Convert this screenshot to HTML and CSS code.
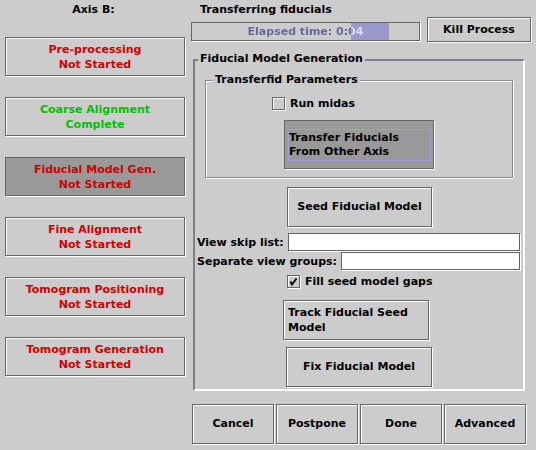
FILE: index.html
```html
<!DOCTYPE html>
<html>
<head>
<meta charset="utf-8">
<link rel="stylesheet" href="styles.css">
</head>
<body>
<div class="app">
  <div class="left">
    <div class="axis">Axis B:</div>
    <div class="btn stage red"><span>Pre-processing</span><span>Not Started</span></div>
    <div class="btn stage green"><span>Coarse Alignment</span><span>Complete</span></div>
    <div class="btn on stage red"><span>Fiducial Model Gen.</span><span>Not Started</span></div>
    <div class="btn stage red"><span>Fine Alignment</span><span>Not Started</span></div>
    <div class="btn stage red"><span>Tomogram Positioning</span><span>Not Started</span></div>
    <div class="btn stage red"><span>Tomogram Generation</span><span>Not Started</span></div>
  </div>
  <div class="right">
    <div class="top">
      <div class="status">
        <div class="title">Transferring fiducials</div>
        <div class="progress">
          <div class="ptext">Elapsed time: 0:04</div>
        </div>
      </div>
      <div class="btn kill">Kill Process</div>
    </div>
    <fieldset class="outer">
      <legend>Fiducial Model Generation</legend>
      <fieldset class="inner">
        <legend>Transferfid Parameters</legend>
        <label class="check midas"><span class="box"></span><span>Run midas</span></label>
        <div class="btn on transfer"><span class="focus">Transfer Fiducials<br>From Other Axis</span></div>
      </fieldset>
      <div class="btn seed">Seed Fiducial Model</div>
      <div class="row first"><span class="lbl">View skip list:</span><span class="field"></span></div>
      <div class="row"><span class="lbl">Separate view groups:</span><span class="field"></span></div>
      <label class="check fillseed"><span class="box"><svg width="13" height="13" viewBox="0 0 13 13"><path d="M3.5 6.5 L5 9.5 L9.5 3.5" fill="none" stroke="#000" stroke-width="1.8"/></svg></span><span>Fill seed model gaps</span></label>
      <div class="btn track">Track Fiducial Seed<br>Model</div>
      <div class="btn fix">Fix Fiducial Model</div>
    </fieldset>
    <div class="actions">
      <div class="btn act">Cancel</div>
      <div class="btn act">Postpone</div>
      <div class="btn act">Done</div>
      <div class="btn act">Advanced</div>
    </div>
  </div>
</div>
</body>
</html>
```
FILE: styles.css
```css
* { box-sizing: border-box; }
html, body { margin: 0; padding: 0; }
body {
  width: 536px;
  height: 450px;
  overflow: hidden;
  background: #cccccc;
  color: #000;
  font-family: "DejaVu Sans", sans-serif;
  font-weight: bold;
  font-size: 11px;
  line-height: 15px;
}
.app { display: flex; }

.btn {
  border: 1px solid #666666;
  background: #cccccc;
  box-shadow: inset 1px 1px #ffffff, 1px 1px #ffffff;
}
.btn.on {
  background: #999999;
  box-shadow: 1px 1px #ffffff;
}

.left { width: 191px; flex: none; }
.axis {
  width: 187px;
  height: 37px;
  padding-top: 2px;
  text-align: center;
}
.stage {
  margin-left: 5px;
  margin-bottom: 21px;
  width: 180px;
  height: 39px;
  display: flex;
  flex-direction: column;
  align-items: center;
  justify-content: center;
}
.red { color: #cc0000; }
.green { color: #00c000; }

.right { width: 345px; flex: none; }
.top { display: flex; align-items: flex-start; }
.status { width: 229px; padding-top: 2px; }
.title { padding-left: 9px; }
.progress {
  margin-top: 5px;
  height: 19px;
  border: 1px solid #666666;
  box-shadow: 1px 1px #ffffff;
  background: linear-gradient(to right, #cccccc 159px, #9999cc 159px, #9999cc 197px, #cccccc 197px);
}
.ptext {
  width: 227px;
  line-height: 17px;
  text-align: center;
  color: transparent;
  background: linear-gradient(to right, #666699 159px, #ddddff 159px, #ddddff 197px, #666699 197px);
  -webkit-background-clip: text;
  background-clip: text;
}
.kill {
  margin-left: 7px;
  margin-top: 17px;
  width: 104px;
  height: 25px;
  line-height: 23px;
  text-align: center;
}

fieldset { margin: 0; min-width: 0; }
legend {
  line-height: 15px;
  padding: 0 2px 2px;
  background: #cccccc;
}
.outer {
  margin: 9px 0 0 2px;
  width: 332px;
  padding: 0 0 2px 0;
  border: 2px solid;
  border-color: #7f7f8c #ffffff #ffffff #7f7f8c;
}
.outer > legend { margin-left: 3px; }
.inner {
  margin: 4px 10px 0;
  padding: 0 0 8px 0;
  border: 1px solid #8a8a96;
  box-shadow: inset 1px 1px #ffffff, 1px 1px #ffffff;
}
.inner > legend { margin-left: 7px; }

.check { display: flex; align-items: center; }
.box {
  width: 13px;
  height: 13px;
  border: 1px solid #666666;
  box-shadow: inset 1px 1px #ffffff, 1px 1px #ffffff;
  margin-right: 5px;
  position: relative;
}
.box svg { position: absolute; left: -1px; top: -1px; }
.midas { margin: 7px 0 0 66px; }
.transfer {
  margin: 9px 0 0 78px;
  width: 150px;
  height: 49px;
  padding-left: 3px;
  display: flex;
  align-items: center;
}
.focus {
  display: block;
  width: 143px;
  height: 32px;
  border: 1px solid #a0a0d8;
  padding-top: 1px;
  line-height: 14px;
}
.seed {
  margin: 9px 0 0 92px;
  width: 145px;
  height: 40px;
  line-height: 38px;
  text-align: center;
}
.row {
  display: flex;
  height: 19px;
  line-height: 19px;
  padding-left: 2px;
  margin-right: 3px;
}
.row.first { margin-top: 6px; }
.field {
  flex: 1;
  height: 18px;
  margin-left: 4px;
  background: #ffffff;
  border: 1px solid #666666;
  box-shadow: 1px 1px #ffffff;
}
.fillseed { margin: 3px 0 0 92px; }
.track {
  margin: 11px 0 0 88px;
  width: 146px;
  height: 40px;
  padding-left: 4px;
  display: flex;
  align-items: center;
  line-height: 15px;
}
.fix {
  margin: 7px 0 0 91px;
  width: 146px;
  height: 40px;
  line-height: 38px;
  text-align: center;
}
.actions {
  display: flex;
  gap: 2px;
  margin: 13px 0 0 1px;
}
.act {
  width: 82px;
  height: 40px;
  line-height: 38px;
  text-align: center;
}
```
